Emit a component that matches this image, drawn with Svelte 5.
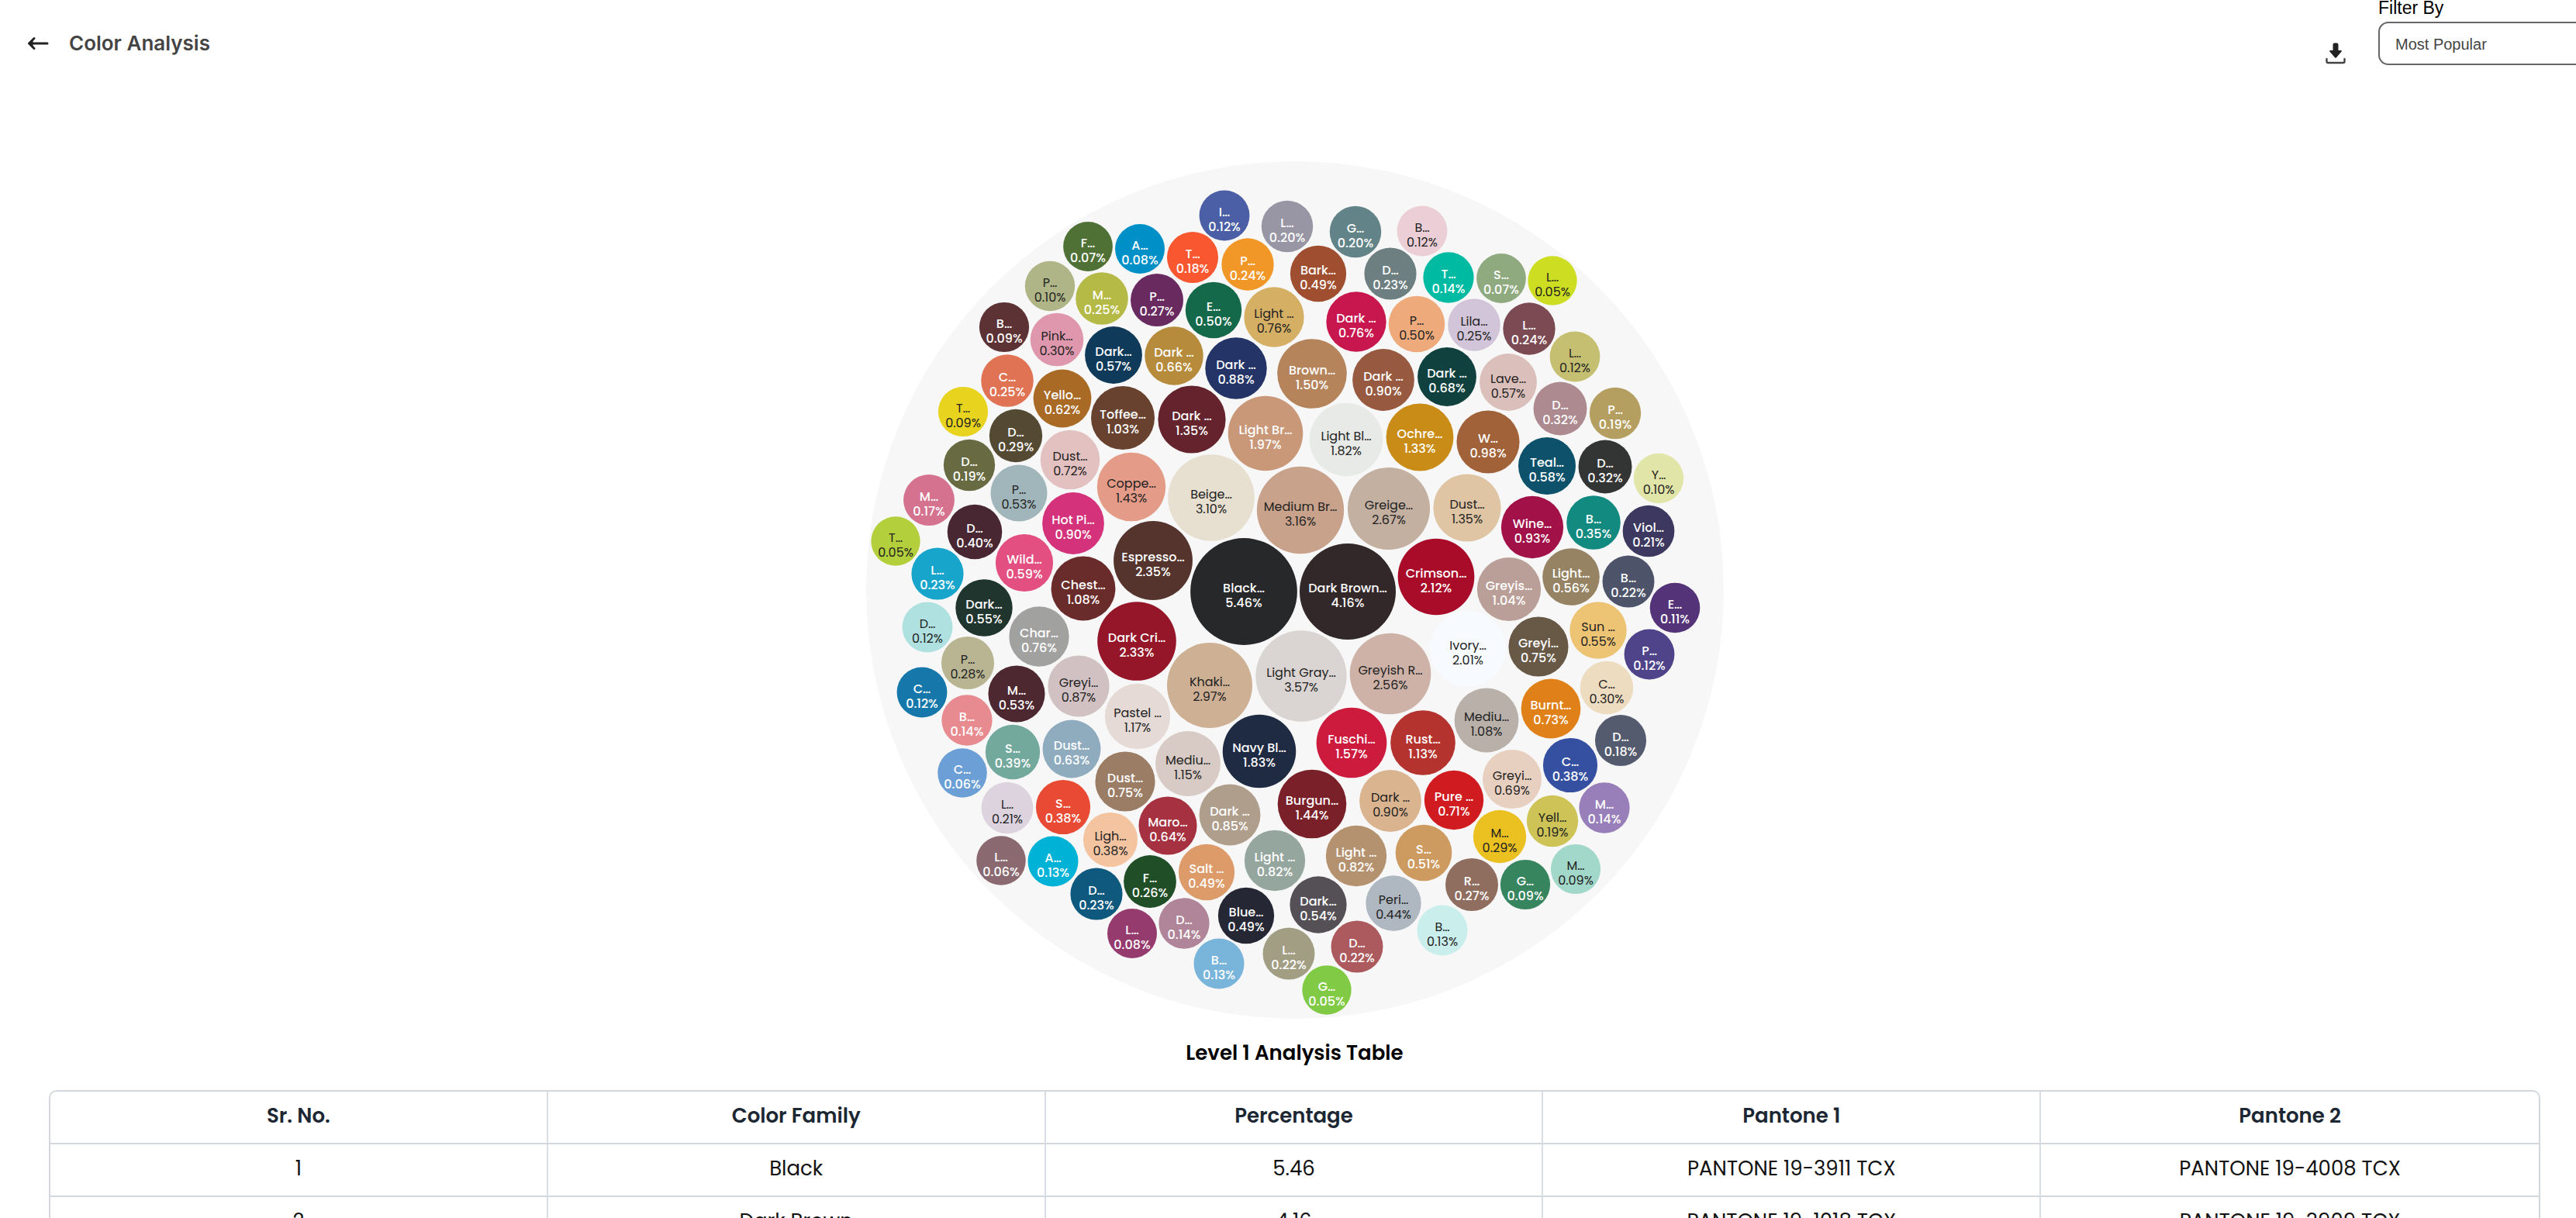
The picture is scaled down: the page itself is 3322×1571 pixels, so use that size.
<script>
  // name, percentage, centre x, centre y, fill, dark label
  const bubbles = [
    ['F…', '0.07', 1403, 318, '#4f7135'],
    ['A…', '0.08', 1470, 321, '#0090c8'],
    ['P…', '0.10', 1354, 369, '#afb586', 1],
    ['M…', '0.25', 1421, 385, '#b5b945'],
    ['B…', '0.09', 1295, 422, '#5d3235'],
    ['Pink…', '0.30', 1363, 438, '#de97ac', 1],
    ['Dark…', '0.57', 1436, 458, '#103a5a'],
    ['C…', '0.25', 1299, 491, '#df7353'],
    ['Yello…', '0.62', 1370, 514, '#a96a26'],
    ['T…', '0.09', 1242, 531, '#e8d31f', 1],
    ['D…', '0.29', 1310, 562, '#544a34'],
    ['Toffee…', '1.03', 1448, 539, '#68422f'],
    ['D…', '0.19', 1250, 600, '#686b42'],
    ['Dust…', '0.72', 1380, 593, '#e3c1c1', 1],
    ['P…', '0.53', 1314, 636, '#a1b6ba', 1],
    ['Coppe…', '1.43', 1459, 628, '#e49b87', 1],
    ['M…', '0.17', 1198, 645, '#d4728f'],
    ['Hot Pi…', '0.90', 1384, 675, '#d4327a'],
    ['I…', '0.12', 1579, 278, '#4a5fa5'],
    ['L…', '0.20', 1660, 292, '#9896a5'],
    ['G…', '0.20', 1748, 299, '#628387'],
    ['B…', '0.12', 1834, 298, '#ebced6', 1],
    ['T…', '0.18', 1538, 332, '#f8572f'],
    ['P…', '0.24', 1609, 341, '#f09728'],
    ['Bark…', '0.49', 1700, 353, '#9f4e2f'],
    ['D…', '0.23', 1793, 353, '#6d7f81'],
    ['T…', '0.14', 1868, 358, '#00bba2'],
    ['P…', '0.27', 1492, 387, '#692a60'],
    ['E…', '0.50', 1565, 400, '#14694a'],
    ['Light …', '0.76', 1643, 409, '#d5af64', 1],
    ['Dark …', '0.76', 1749, 415, '#c8174e'],
    ['P…', '0.50', 1827, 418, '#eeaa7a', 1],
    ['Dark …', '0.66', 1514, 459, '#b68b3b'],
    ['Dark …', '0.88', 1594, 475, '#243466'],
    ['Brown…', '1.50', 1692, 482, '#b5845b'],
    ['Dark …', '0.90', 1784, 490, '#975a40'],
    ['Dark …', '0.68', 1866, 486, '#11413e'],
    ['Dark …', '1.35', 1537, 541, '#64232d'],
    ['Light Br…', '1.97', 1632, 559, '#c99878'],
    ['Light Bl…', '1.82', 1736, 567, '#e8eae7', 1],
    ['Ochre…', '1.33', 1831, 564, '#c98c16'],
    ['Beige…', '3.10', 1562, 642, '#e7dfcf', 1],
    ['Medium Br…', '3.16', 1677, 658, '#c9a28c', 1],
    ['Greige…', '2.67', 1791, 656, '#c4b0a0', 1],
    ['S…', '0.07', 1936, 359, '#90aa80'],
    ['L…', '0.05', 2002, 362, '#cddd21', 1],
    ['Lila…', '0.25', 1901, 419, '#d2c5d9', 1],
    ['L…', '0.24', 1972, 424, '#7b4a53'],
    ['L…', '0.12', 2031, 460, '#c5c071', 1],
    ['Lave…', '0.57', 1945, 493, '#dbbfba', 1],
    ['D…', '0.32', 2012, 527, '#ad8a8f'],
    ['P…', '0.19', 2083, 533, '#b59f60'],
    ['W…', '0.98', 1919, 570, '#a26239'],
    ['Teal…', '0.58', 1995, 601, '#0d516a'],
    ['D…', '0.32', 2070, 602, '#333535'],
    ['Y…', '0.10', 2139, 617, '#e2e5a8', 1],
    ['Dust…', '1.35', 1892, 655, '#dfc5a4', 1],
    ['Wine…', '0.93', 1976, 680, '#a21148'],
    ['B…', '0.35', 2055, 674, '#128a80'],
    ['Viol…', '0.21', 2126, 685, '#3c3860'],
    ['Greyis…', '1.04', 1946, 760, '#ba9f98'],
    ['Light…', '0.56', 2026, 744, '#968364'],
    ['B…', '0.22', 2100, 750, '#4d5469'],
    ['E…', '0.11', 2160, 784, '#553378'],
    ['Sun …', '0.55', 2061, 813, '#edc474', 1],
    ['P…', '0.12', 2127, 844, '#4f448a'],
    ['Greyi…', '0.75', 1984, 834, '#685846'],
    ['C…', '0.30', 2072, 887, '#eddcbf', 1],
    ['Burnt…', '0.73', 2000, 914, '#e08018'],
    ['Mediu…', '1.08', 1917, 929, '#b9b0aa', 1],
    ['D…', '0.18', 2090, 955, '#555b6e'],
    ['C…', '0.38', 2025, 987, '#3650a1'],
    ['Greyi…', '0.69', 1950, 1005, '#e8d0c1', 1],
    ['M…', '0.14', 2069, 1042, '#987fba'],
    ['Yell…', '0.19', 2002, 1059, '#cdc356', 1],
    ['M…', '0.29', 1934, 1079, '#ebc021', 1],
    ['Pure …', '0.71', 1875, 1032, '#d01c20'],
    ['Ivory…', '2.01', 1893, 837, '#f7fbff', 1],
    ['Crimson…', '2.12', 1852, 744, '#a90c29'],
    ['T…', '0.05', 1155, 698, '#b3cf3b', 1],
    ['D…', '0.40', 1257, 686, '#482733'],
    ['L…', '0.23', 1209, 740, '#17a5cc'],
    ['Wild…', '0.59', 1321, 726, '#e24f80'],
    ['Dark…', '0.55', 1269, 784, '#21352f'],
    ['Chest…', '1.08', 1397, 759, '#6a2c2a'],
    ['Espresso…', '2.35', 1487, 723, '#54342d'],
    ['Char…', '0.76', 1340, 821, '#a1a1a0'],
    ['D…', '0.12', 1196, 809, '#aee1df', 1],
    ['P…', '0.28', 1248, 855, '#b9b593', 1],
    ['Dark Cri…', '2.33', 1466, 827, '#941628'],
    ['Greyi…', '0.87', 1391, 885, '#d2c1c2', 1],
    ['M…', '0.53', 1311, 895, '#4d2831'],
    ['C…', '0.12', 1189, 893, '#1678aa'],
    ['B…', '0.14', 1247, 929, '#e78b91'],
    ['Pastel …', '1.17', 1467, 924, '#e5dad5', 1],
    ['S…', '0.39', 1306, 970, '#73a99d'],
    ['Dust…', '0.63', 1382, 966, '#8facbf'],
    ['C…', '0.06', 1241, 997, '#6b9fd5'],
    ['L…', '0.21', 1299, 1042, '#dcd3de', 1],
    ['Dust…', '0.75', 1451, 1008, '#9b7d66'],
    ['S…', '0.38', 1371, 1041, '#e84a34'],
    ['Ligh…', '0.38', 1432, 1083, '#f4c4a1', 1],
    ['Black…', '5.46', 1604, 763, '#27282a'],
    ['Dark Brown…', '4.16', 1738, 763, '#32282a'],
    ['Khaki…', '2.97', 1560, 884, '#ceb094', 1],
    ['Light Gray…', '3.57', 1678, 872, '#dad5d2', 1],
    ['Greyish R…', '2.56', 1793, 869, '#ceb2a8', 1],
    ['Navy Bl…', '1.83', 1624, 969, '#1f2b42'],
    ['Fuschi…', '1.57', 1743, 958, '#cd1b3e'],
    ['Rust…', '1.13', 1835, 958, '#b5332e'],
    ['Mediu…', '1.15', 1532, 985, '#d8cbc5', 1],
    ['Dark …', '0.85', 1586, 1051, '#b09e8c'],
    ['Burgun…', '1.44', 1692, 1037, '#7a2029'],
    ['Dark …', '0.90', 1793, 1033, '#dab48f', 1],
    ['Maro…', '0.64', 1506, 1065, '#a53141'],
    ['Light …', '0.82', 1644, 1110, '#95a69e'],
    ['Light …', '0.82', 1749, 1104, '#b5926f'],
    ['S…', '0.51', 1836, 1100, '#cd9a60'],
    ['L…', '0.06', 1291, 1110, '#8a6970'],
    ['A…', '0.13', 1358, 1111, '#00b2d6'],
    ['D…', '0.23', 1414, 1153, '#0f587e'],
    ['F…', '0.26', 1483, 1137, '#1f4e27'],
    ['Salt …', '0.49', 1556, 1125, '#dd9b69'],
    ['L…', '0.08', 1460, 1204, '#963b6d'],
    ['D…', '0.14', 1527, 1191, '#b08599'],
    ['Blue…', '0.49', 1607, 1181, '#262735'],
    ['B…', '0.13', 1572, 1243, '#79b4da'],
    ['L…', '0.22', 1662, 1230, '#a29e84'],
    ['Dark…', '0.54', 1700, 1167, '#545056'],
    ['Peri…', '0.44', 1797, 1165, '#afb7c1', 1],
    ['R…', '0.27', 1898, 1141, '#8f6e60'],
    ['G…', '0.09', 1967, 1141, '#37855f'],
    ['M…', '0.09', 2032, 1121, '#a1d8c9', 1],
    ['D…', '0.22', 1750, 1221, '#ac5a5d'],
    ['B…', '0.13', 1860, 1200, '#caeeec', 1],
    ['G…', '0.05', 1711, 1277, '#81ca46']
  ].map(([name, pct, x, y, fill, dark]) => ({
    name, pct, x, y, fill, dark,
    r: Math.sqrt(968 + 692 * Number(pct))
  }));

  const columns = ['Sr. No.', 'Color Family', 'Percentage', 'Pantone 1', 'Pantone 2'];
  const rows = [
    ['1', 'Black', '5.46', 'PANTONE 19-3911 TCX', 'PANTONE 19-4008 TCX'],
    ['2', 'Dark Brown', '4.16', 'PANTONE 19-1018 TCX', 'PANTONE 19-3909 TCX']
  ];
</script>

<div class="page">
  <header>
    <button class="icon back" aria-label="Back">
      <svg width="28" height="18" viewBox="0 0 28 18" fill="none" stroke="#222" stroke-width="3" stroke-linecap="round" stroke-linejoin="round">
        <path d="M2.500 9H26M9 2.500L2.500 9L9 15.500" />
        <path d="M2.500 9L7 5V13Z" fill="#222" stroke-width="1" />
      </svg>
    </button>
    <h1>Color Analysis</h1>
    <div class="actions">
      <button class="icon download" aria-label="Download">
        <svg width="26" height="28" viewBox="0 0 26 28">
          <path d="M9.500 2.500Q9.500 0.500 11.500 0.500H14.500Q16.500 0.500 16.500 2.500V10H20Q21.700 10.200 20.600 11.600L14.200 19Q13 20.300 11.800 19L5.400 11.600Q4.300 10.200 6 10H9.500Z" fill="#222" />
          <path d="M1.500 21V24.200Q1.500 26 3.300 26H22.700Q24.500 26 24.500 24.200V21" fill="none" stroke="#444" stroke-width="2.400" stroke-linecap="round" />
        </svg>
      </button>
      <div class="filter">
        <label for="filter">Filter By</label>
        <select id="filter">
          <option>Most Popular</option>
        </select>
      </div>
    </div>
  </header>

  <main>
    <svg class="chart" viewBox="1117 208 1106 1106" role="img" aria-label="Color share by family">
      <circle cx="1670" cy="761" r="553" fill="#f7f7f7" />
      {#each bubbles as b}
        <g class:dark={b.dark}>
          <circle cx={b.x} cy={b.y} r={b.r} fill={b.fill} />
          <text x={b.x} y={b.y + 1}>{b.name}</text>
          <text x={b.x} y={b.y + 20}>{b.pct}%</text>
        </g>
      {/each}
    </svg>

    <h2>Level 1 Analysis Table</h2>

    <div class="frame">
      <table>
        <thead>
          <tr>{#each columns as c}<th scope="col">{c}</th>{/each}</tr>
        </thead>
        <tbody>
          {#each rows as row}
            <tr>{#each row as cell}<td>{cell}</td>{/each}</tr>
          {/each}
        </tbody>
      </table>
    </div>
  </main>
</div>

<style>
  :global(body) {
    background: #fff;
  }
  .page {
    box-sizing: border-box;
    height: 100vh;
    overflow-x: hidden;
    overflow-y: auto;
    scrollbar-width: none;
    font-family: Poppins, Inter, sans-serif;
    color: #111;
  }
  header {
    display: flex;
    align-items: center;
    height: 112px;
    padding-left: 35px;
  }
  .icon {
    display: flex;
    padding: 0;
    border: 0;
    background: none;
  }
  h1 {
    margin: 0 0 0 26px;
    font: 600 26px/32px Inter, sans-serif;
    color: #444;
  }
  .actions {
    display: flex;
    align-items: flex-start;
    align-self: flex-start;
    gap: 42px;
    margin: 0 -65px 0 auto;
  }
  .download {
    margin-top: 55px;
  }
  .filter {
    display: flex;
    flex-direction: column;
    width: 320px;
    font-family: "Liberation Sans", sans-serif;
  }
  label {
    height: 28px;
    font-size: 23px;
    line-height: 21px;
    color: #000;
  }
  select {
    height: 56px;
    padding: 2px 20px 0;
    border: 2px solid #666;
    border-radius: 13px;
    background: #fff;
    font: 20px "Liberation Sans", sans-serif;
    color: #444;
    appearance: none;
  }
  main {
    display: flex;
    flex-direction: column;
    align-items: center;
    padding: 96px 46px 40px 63px;
  }
  .chart {
    width: 100%;
    max-width: 1106px;
  }
  .chart text {
    fill: #fff;
    font-size: 16px;
    font-weight: 500;
    text-anchor: middle;
  }
  .chart .dark text {
    fill: #222;
    font-weight: 400;
  }
  h2 {
    margin: 28px 0 32px;
    font-size: 26px;
    line-height: 32px;
    font-weight: 600;
    color: #000;
  }
  .frame {
    box-sizing: border-box;
    width: 100%;
    border: 2px solid #d3d8de;
    border-radius: 10px;
    overflow: hidden;
  }
  table {
    width: 100%;
    border-collapse: separate;
    border-spacing: 0;
    table-layout: fixed;
  }
  th,
  td {
    box-sizing: border-box;
    height: 68px;
    padding: 0 0 4px;
    border-right: 2px solid #d9dee3;
    border-bottom: 2px solid #d3d8de;
    font-size: 26px;
    line-height: 32px;
    text-align: center;
  }
  th:last-child,
  td:last-child {
    border-right: 0;
  }
  th {
    font-weight: 600;
    color: #1c2733;
  }
</style>
